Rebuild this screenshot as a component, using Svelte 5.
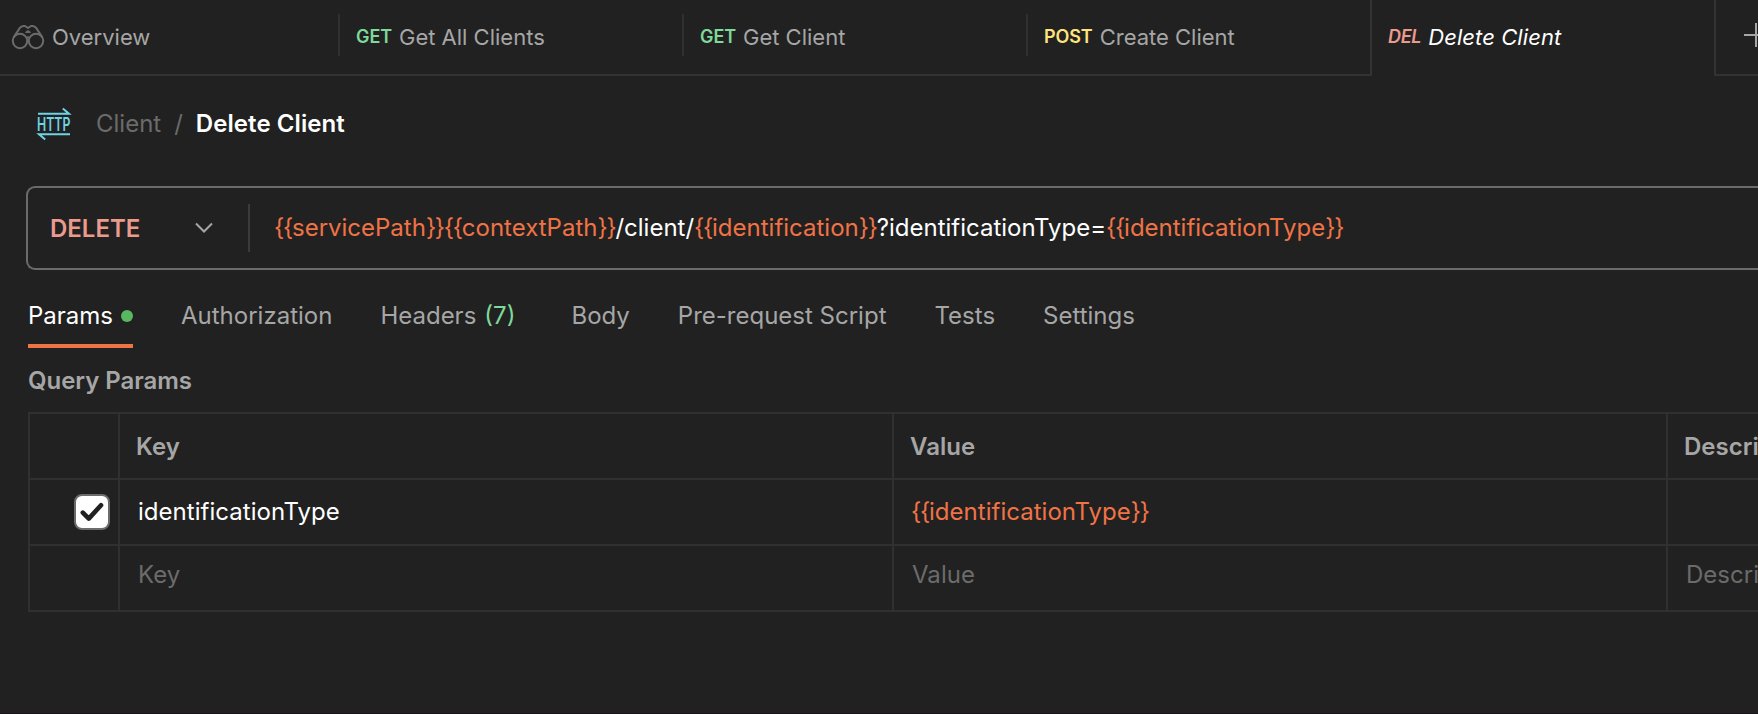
<script>
  const requests = [
    { method: 'GET', name: 'Get All Clients' },
    { method: 'GET', name: 'Get Client' },
    { method: 'POST', name: 'Create Client' },
    { method: 'DEL', name: 'Delete Client', active: true }
  ];

  const sections = [
    { label: 'Params', dot: true, active: true },
    { label: 'Authorization' },
    { label: 'Headers', count: '(7)' },
    { label: 'Body' },
    { label: 'Pre-request Script' },
    { label: 'Tests' },
    { label: 'Settings' }
  ];

  const url = '{{servicePath}}{{contextPath}}/client/{{identification}}?identificationType={{identificationType}}';
  const value = '{{identificationType}}';

  // Splits a template string into braces, variable names and plain text.
  function tokens(text) {
    const out = [];
    for (const part of text.split(/(\{\{.*?\}\})/).filter(Boolean)) {
      if (part.startsWith('{{')) {
        out.push({ kind: 'brace', text: '{{' });
        out.push({ kind: 'variable', text: part.slice(2, -2) });
        out.push({ kind: 'brace', text: '}}' });
      } else {
        out.push({ kind: 'plain', text: part });
      }
    }
    return out;
  }
</script>

{#snippet template(text)}
  <span class="template">{#each tokens(text) as t}<span class={t.kind}>{t.text}</span>{/each}</span>
{/snippet}

<div class="app">
  <nav class="tabs">
    <div class="tab overview">
      <svg width="34" height="26" viewBox="0 0 34 26" fill="none" stroke="#6b6b6b" stroke-width="2">
        <circle cx="9" cy="17" r="7.2" />
        <circle cx="25" cy="17" r="7.2" />
        <path d="M2.6 13.4 8.6 4.2Q10.2 2 12.4 2H14L17 4 20 2h1.6q2.2 0 3.8 2.2l6 9.2" stroke-linejoin="round" />
        <path d="M14.6 8.6q.4-1.8 2.4-1.8t2.4 1.8z" fill="#6b6b6b" stroke-width="1" />
        <path d="M15.6 13.6q1.4-1 2.8 0" stroke-width="1.6" />
      </svg>
      <span class="name">Overview</span>
    </div>
    {#each requests as r}
      <div class="tab" class:active={r.active}>
        <span class="method {r.method.toLowerCase()}">{r.method}</span>
        <span class="name">{r.name}</span>
      </div>
    {/each}
    <div class="add">
      <svg width="24" height="24" viewBox="0 0 24 24" stroke="#a6a6a6" stroke-width="2">
        <path d="M0 12h24M12 0v24" />
      </svg>
    </div>
  </nav>

  <header class="crumbs">
    <svg class="http" width="34" height="34" viewBox="0 0 34 34" fill="none" stroke="#6fd3e4" stroke-width="2">
      <path d="M1 6.7h31l-6.2-5.2" />
      <path d="M33 27.3H2l6.2 5.2" />
      <text x="0" y="23.8" font-size="18.3" font-weight="600" fill="#6fd3e4" stroke="none" textLength="33.4" lengthAdjust="spacingAndGlyphs">HTTP</text>
    </svg>
    <span class="parent">Client</span>
    <span class="slash">/</span>
    <span class="current">Delete Client</span>
  </header>

  <div class="urlbar">
    <div class="verb">
      <span>DELETE</span>
      <svg width="18" height="12" viewBox="0 0 18 12" fill="none" stroke="#a6a6a6" stroke-width="2">
        <path d="M1 1.5l8 8 8-8" />
      </svg>
    </div>
    <div class="url">{@render template(url)}</div>
  </div>

  <nav class="sections">
    {#each sections as s}
      <div class="section" class:active={s.active} class:counted={s.count}>
        <span>{s.label}</span>
        {#if s.count}<span class="count">{s.count}</span>{/if}
        {#if s.dot}<i class="dot"></i>{/if}
      </div>
    {/each}
  </nav>

  <h2>Query Params</h2>

  <div class="grid">
    <div class="cell"></div>
    <div class="cell head">Key</div>
    <div class="cell head">Value</div>
    <div class="cell head">Description</div>

    <div class="cell toggle">
      <span class="checkbox">
        <svg width="24" height="22" viewBox="0 0 24 22" fill="none" stroke="#212121" stroke-width="4.6" stroke-linecap="round" stroke-linejoin="round">
          <path d="M2.8 11.6l6 6L21 4.2" />
        </svg>
      </span>
    </div>
    <div class="cell">identificationType</div>
    <div class="cell templated">{@render template(value)}</div>
    <div class="cell"></div>

    <div class="cell"></div>
    <div class="cell hint">Key</div>
    <div class="cell hint">Value</div>
    <div class="cell hint">Description</div>
  </div>
</div>

<style>
  :global(body) {
    background: #212121;
  }

  .app {
    box-sizing: border-box;
    width: 100%;
    height: 714px;
    overflow: hidden;
    display: flex;
    flex-direction: column;
    background: #212121;
    border-bottom: 1px solid #19101a;
    color: #fff;
    font: 400 24px/1 Inter, sans-serif;
    white-space: nowrap;
  }

  .app svg {
    display: block;
    flex: none;
  }

  .app .http {
    overflow: visible;
  }

  .tabs {
    flex: none;
    display: flex;
    height: 76px;
    font-size: 22px;
    color: #a6a6a6;
  }

  .tab {
    box-sizing: border-box;
    flex: none;
    width: 344px;
    display: flex;
    align-items: center;
    gap: 7px;
    padding-left: 18px;
    border-bottom: 2px solid #333;
    background: linear-gradient(#303030, #303030) no-repeat 0 14px / 2px 42px;
  }

  .tab.overview {
    width: 338px;
    padding-left: 11px;
    background: none;
  }

  .tab.active {
    width: 346px;
    height: 76px;
    padding: 0 0 2px 16px;
    border: 0 solid #333;
    border-width: 0 2px;
    background: none;
    color: #fff;
    font-style: italic;
    letter-spacing: 0.08px;
  }

  .method {
    font-size: 18px;
    font-weight: 600;
    line-height: 22px;
    padding-bottom: 1px;
    letter-spacing: -0.1px;
  }

  .get { color: #7fd99a; }
  .post { color: #ffe47e; }
  .del { color: #eb9a8e; letter-spacing: -0.3px; }

  .add {
    box-sizing: border-box;
    flex: none;
    display: flex;
    align-items: center;
    width: 60px;
    padding: 0 0 4px 28px;
    border-bottom: 2px solid #333;
  }

  .crumbs {
    flex: none;
    display: flex;
    align-items: center;
    height: 34px;
    margin-top: 31px;
    padding-left: 37px;
  }

  .parent {
    color: #6b6b6b;
    margin-left: 25px;
  }

  .slash {
    color: #6b6b6b;
    margin: 0 13px;
  }

  .current {
    font-weight: 600;
    letter-spacing: 0.07px;
  }

  .urlbar {
    box-sizing: border-box;
    flex: none;
    display: flex;
    align-items: center;
    height: 84px;
    margin: 45px 0 0 26px;
    border: 2px solid #6b6b6b;
    border-right: 0;
    border-radius: 9px 0 0 9px;
  }

  .verb {
    box-sizing: border-box;
    display: flex;
    align-items: center;
    width: 222px;
    height: 48px;
    padding: 0 35px 0 22px;
    justify-content: space-between;
    border-right: 2px solid #3b3b3b;
    color: #eb9a8e;
    font-weight: 600;
  }

  .verb span {
    padding-top: 2px;
  }

  .url {
    padding-left: 24px;
  }

  .brace,
  .variable {
    color: #f07346;
  }

  .brace {
    letter-spacing: -1.25px;
  }

  .sections {
    flex: none;
    display: flex;
    gap: 48px;
    height: 64px;
    margin: 14px 0 0 28px;
    color: #a6a6a6;
  }

  .section {
    box-sizing: border-box;
    display: flex;
    align-items: center;
    height: 64px;
  }

  .section.active {
    padding-top: 4px;
    border-bottom: 4px solid #f07346;
    color: #fff;
  }

  .section.counted {
    margin-right: 8px;
  }

  .count {
    color: #7fd99a;
    margin-left: 8px;
  }

  .dot {
    width: 12px;
    height: 12px;
    margin-left: 8px;
    border-radius: 50%;
    background: #58b85f;
  }

  h2 {
    flex: none;
    margin: 20px 0 0 28px;
    font-size: 24px;
    font-weight: 600;
    line-height: 26px;
    color: #a6a6a6;
    letter-spacing: -0.05px;
  }

  .grid {
    flex: none;
    display: grid;
    grid-template-columns: 90px 774px 774px 500px;
    grid-auto-rows: 66px;
    width: 2138px;
    margin: 18px 0 0 28px;
    border: 2px solid #303030;
    border-width: 2px 0 0 2px;
  }

  .cell {
    box-sizing: border-box;
    display: flex;
    align-items: center;
    padding-left: 18px;
    border: 2px solid #303030;
    border-width: 0 2px 2px 0;
    letter-spacing: 0.03px;
  }

  .templated {
    padding-left: 17px;
  }

  .head {
    padding: 2px 0 0 16px;
    font-weight: 600;
    color: #a6a6a6;
  }

  .hint {
    padding-bottom: 6px;
    color: #6b6b6b;
  }

  .toggle {
    padding-left: 44px;
  }

  .checkbox {
    box-sizing: border-box;
    flex: none;
    display: flex;
    align-items: center;
    justify-content: center;
    width: 36px;
    height: 36px;
    border: 2px solid #6b6b6b;
    border-radius: 8px;
    background: #fff;
  }
</style>
